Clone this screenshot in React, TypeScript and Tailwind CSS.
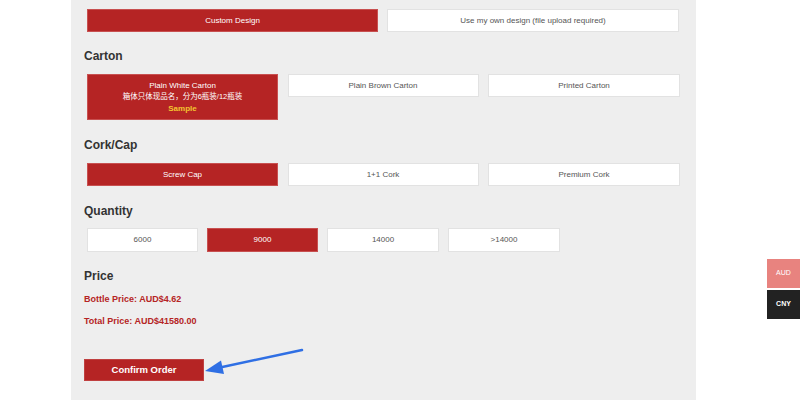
import React from 'react';

const font = "font-['Liberation_Sans','Noto_Sans_CJK_SC',sans-serif]";

function Opt({ label, active, className = '' }: { label: React.ReactNode; active?: boolean; className?: string }) {
  return (
    <div
      className={`flex flex-col items-center justify-center text-[8px] leading-[11.5px] border ${
        active ? 'bg-[#b52424] border-[#c85050] text-white' : 'bg-white border-[#e2e2e2] text-[#555]'
      } ${className}`}
    >
      {label}
    </div>
  );
}

function Heading({ children, className = '' }: { children: React.ReactNode; className?: string }) {
  return <h2 className={`text-[12px] leading-[18px] font-bold text-[#333] ${className}`}>{children}</h2>;
}

export default function App() {
  return (
    <div className={`relative w-[800px] h-[400px] overflow-hidden bg-white ${font}`}>
      <div className="ml-[71px] w-[625px] h-full bg-[#eeeeee] pl-[13px] pt-[9px]">
        {/* Design */}
        <div className="ml-[3px] grid grid-cols-[291px_292px] gap-[9px]">
          <Opt label="Custom Design" active className="h-[23px]" />
          <Opt label="Use my own design (file upload required)" className="h-[23px]" />
        </div>

        {/* Carton */}
        <Heading className="mt-[15px]">Carton</Heading>
        <div className="ml-[3px] mt-[9px] grid grid-cols-[191px_191px_192px] gap-[9.5px] items-start">
          <Opt
            active
            className="h-[46px]"
            label={
              <>
                <span>Plain White Carton</span>
                <span className="text-[7.5px]">箱体只体现品名，分为6瓶装/12瓶装</span>
                <span className="font-bold text-[#f3c530]">Sample</span>
              </>
            }
          />
          <Opt label="Plain Brown Carton" className="h-[23px]" />
          <Opt label="Printed Carton" className="h-[23px]" />
        </div>

        {/* Cork */}
        <Heading className="mt-[16px]">Cork/Cap</Heading>
        <div className="ml-[3px] mt-[9px] grid grid-cols-[191px_191px_192px] gap-[9.5px]">
          <Opt label="Screw Cap" active className="h-[23px]" />
          <Opt label="1+1 Cork" className="h-[23px]" />
          <Opt label="Premium Cork" className="h-[23px]" />
        </div>

        {/* Quantity */}
        <Heading className="mt-[16px]">Quantity</Heading>
        <div className="ml-[3px] mt-[8px] flex gap-[9px]">
          <Opt label="6000" className="w-[111px] h-[24px]" />
          <Opt label="9000" active className="w-[111px] h-[24px]" />
          <Opt label="14000" className="w-[112px] h-[24px]" />
          <Opt label=">14000" className="w-[112px] h-[24px]" />
        </div>

        {/* Price */}
        <Heading className="mt-[15px]">Price</Heading>
        <p className="mt-[7px] text-[9px] leading-[14px] font-bold text-[#b52424]">Bottle Price: AUD$4.62</p>
        <p className="mt-[8px] text-[9px] leading-[14px] font-bold text-[#b52424]">Total Price: AUD$41580.00</p>

        <button className="mt-[31px] w-[120px] h-[22px] bg-[#b52424] border border-[#c04040] text-white text-[9.5px] font-bold flex items-center justify-center">
          Confirm Order
        </button>
      </div>

      {/* currency tabs */}
      <div className="absolute right-0 top-[259px] w-[33px] flex flex-col gap-[2px]">
        <div className="h-[29px] bg-[#e8837f] text-white text-[7px] flex items-center justify-center">AUD</div>
        <div className="h-[29px] bg-[#222] text-white text-[7px] font-bold flex items-center justify-center">CNY</div>
      </div>

      {/* annotation arrow */}
      <svg className="absolute left-0 top-0 pointer-events-none" width="800" height="400">
        <line x1="302" y1="350" x2="220" y2="367.5" stroke="#2f6fe4" strokeWidth="2.5" strokeLinecap="round" />
        <polygon points="205,371 221,360.5 224,374" fill="#2f6fe4" />
      </svg>
    </div>
  );
}
